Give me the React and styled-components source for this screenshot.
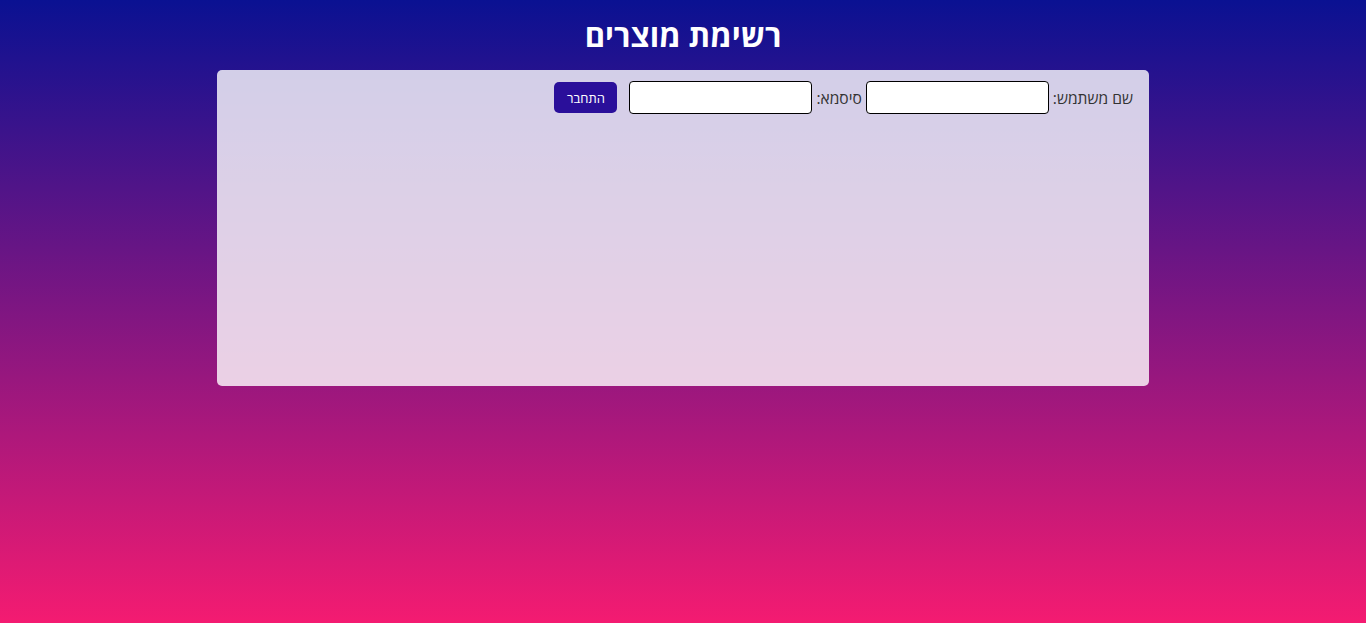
import React from 'react'
import styled, { createGlobalStyle } from 'styled-components'

const GlobalStyle = createGlobalStyle`
  html, body {
    margin: 0;
    padding: 0;
  }
  body {
    font-family: "Open Sans", "Noto Sans", "DejaVu Sans", sans-serif;
    background: linear-gradient(to bottom, #0a1192 0%, #f41b71 100%);
    min-height: 100vh;
  }
`

const Page = styled.div`
  direction: rtl;
  min-height: 100vh;
  padding-top: 15px;
  box-sizing: border-box;
  display: flex;
  flex-direction: column;
  align-items: center;
`

const Title = styled.h1`
  margin: 0 0 15px;
  font-size: 31px;
  line-height: 40px;
  font-weight: 700;
  color: #fff;
`

const Card = styled.div`
  width: 932px;
  height: 316px;
  box-sizing: border-box;
  padding: 11px 16px;
  background: rgba(255, 255, 255, 0.8);
  border-radius: 5px;
`

const LoginRow = styled.form`
  display: flex;
  align-items: center;
`

const Label = styled.label`
  font-size: 15.6px;
  color: #333;
  margin-left: 4px;
`

const Input = styled.input`
  width: 183px;
  height: 33px;
  box-sizing: border-box;
  border: 1px solid #000;
  border-radius: 4px;
  background: #fff;
  margin-left: ${(p) => p.$gap || 0}px;
`

const Button = styled.button`
  width: 63px;
  height: 31px;
  border: none;
  border-radius: 5px;
  background: #2a0f9a;
  color: #fff;
  font-family: inherit;
  font-size: 13px;
  cursor: pointer;
`

export default function App() {
  return (
    <>
      <GlobalStyle />
      <Page>
        <Title>רשימת מוצרים</Title>
        <Card>
          <LoginRow onSubmit={(e) => e.preventDefault()}>
            <Label>שם משתמש:</Label>
            <Input type="text" $gap={4} />
            <Label>סיסמא:</Label>
            <Input type="password" $gap={12} />
            <Button type="submit">התחבר</Button>
          </LoginRow>
        </Card>
      </Page>
    </>
  )
}
